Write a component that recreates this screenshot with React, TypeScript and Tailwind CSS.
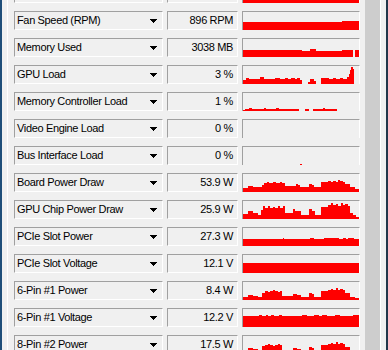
import React from "react";

type Run = [number, number];

const W = 116;
const H = 18;

function expand(runs: Run[]): number[] {
  const arr: number[] = [];
  for (const [n, h] of runs) for (let i = 0; i < n; i++) arr.push(h);
  while (arr.length < W) arr.push(arr.length ? arr[arr.length - 1] : 0);
  return arr.slice(0, W);
}

function Graph({ runs }: { runs: Run[] }) {
  const hs = expand(runs);
  let d = "";
  hs.forEach((h, i) => {
    if (h > 0) d += `M${i} ${H - h}h1v${h}h-1z`;
  });
  return (
    <div className="w-[118px] h-[19px] shrink-0 border-t border-l border-r border-[#a0a0a0] border-r-white">
      <svg width={W} height={H} viewBox={`0 0 ${W} ${H}`} shapeRendering="crispEdges" className="block">
        <path d={d} fill="#ff0000" />
      </svg>
    </div>
  );
}

function Arrow() {
  return (
    <svg width="7" height="4" viewBox="0 0 7 4" shapeRendering="crispEdges" className="block shrink-0">
      <path d="M0 0h7v1h-1v1h-1v1h-1v1h-1v-1h-1v-1h-1v-1h-1z" fill="#000" />
    </svg>
  );
}

const rows: { label: string; value: string; runs: Run[] }[] = [
  { label: "Fan Speed (%)", value: "33 %", runs: [[116, 8]] },
  { label: "Fan Speed (RPM)", value: "896 RPM", runs: [[99, 8], [17, 9]] },
  {
    label: "Memory Used",
    value: "3038 MB",
    runs: [[59, 7], [8, 6], [6, 8], [26, 6], [11, 7], [2, 0], [4, 7]],
  },
  {
    label: "GPU Load",
    value: "3 %",
    runs: [
      [3, 4], [3, 6], [9, 5], [2, 5], [4, 7], [11, 5], [5, 6], [5, 5], [3, 6], [3, 5], [4, 6], [2, 5], [3, 6], [2, 4],
      [6, 0], [2, 2], [4, 5], [2, 3], [5, 0], [8, 6], [4, 5], [3, 6], [4, 5], [3, 6], [4, 5], [2, 7], [1, 10], [1, 14],
      [2, 17], [1, 15], [5, 0],
    ],
  },
  {
    label: "Memory Controller Load",
    value: "1 %",
    runs: [[2, 1], [4, 2], [3, 3], [12, 2], [2, 3], [10, 2], [3, 3], [20, 2], [6, 0], [4, 2], [4, 0], [10, 2], [2, 3], [12, 2], [22, 0]],
  },
  { label: "Video Engine Load", value: "0 %", runs: [[116, 0]] },
  { label: "Bus Interface Load", value: "0 %", runs: [[57, 0], [2, 1], [57, 0]] },
  {
    label: "Board Power Draw",
    value: "53.9 W",
    runs: [
      [5, 4], [5, 6], [5, 5], [4, 5], [2, 7], [3, 9], [2, 10], [4, 9], [3, 10], [4, 9], [2, 10], [3, 9], [11, 6], [2, 8], [2, 7],
      [9, 5], [3, 8], [2, 7], [7, 5], [7, 10], [3, 11], [2, 10], [3, 11], [2, 10], [2, 12], [3, 11], [2, 10], [5, 8], [5, 5], [4, 3],
    ],
  },
  {
    label: "GPU Chip Power Draw",
    value: "25.9 W",
    runs: [
      [5, 5], [5, 8], [5, 6], [3, 4], [2, 9], [2, 13], [3, 11], [2, 13], [3, 11], [2, 12], [3, 11], [2, 13], [3, 11], [2, 13],
      [8, 6], [2, 10], [6, 8], [8, 4], [3, 10], [3, 8], [6, 4], [7, 12], [3, 14], [2, 16], [3, 14], [2, 15], [3, 13], [2, 16],
      [2, 14], [3, 15], [2, 13], [3, 6], [3, 4], [3, 2],
    ],
  },
  {
    label: "PCIe Slot Power",
    value: "27.3 W",
    runs: [[40, 7], [1, 8], [26, 7], [4, 8], [10, 7], [15, 8], [4, 7], [3, 8], [2, 7], [6, 8], [5, 7]],
  },
  { label: "PCIe Slot Voltage", value: "12.1 V", runs: [[116, 10]] },
  {
    label: "6-Pin #1 Power",
    value: "8.4 W",
    runs: [
      [5, 3], [5, 5], [5, 4], [4, 3], [3, 7], [3, 9], [2, 8], [3, 9], [2, 10], [3, 9], [2, 8], [2, 9], [11, 4], [4, 6], [4, 5],
      [8, 3], [3, 7], [2, 6], [7, 3], [7, 9], [3, 10], [2, 11], [3, 10], [2, 12], [2, 10], [3, 11], [2, 10], [5, 7], [5, 3], [4, 2],
    ],
  },
  {
    label: "6-Pin #1 Voltage",
    value: "12.2 V",
    runs: [
      [16, 11], [3, 12], [4, 11], [2, 12], [3, 11], [3, 12], [5, 11], [3, 12], [20, 11], [5, 12], [7, 11], [5, 12], [3, 11],
      [5, 12], [8, 11], [5, 12], [13, 11], [6, 12],
    ],
  },
  {
    label: "8-Pin #2 Power",
    value: "17.5 W",
    runs: [
      [5, 4], [5, 6], [5, 5], [4, 4], [3, 8], [3, 9], [2, 10], [3, 9], [2, 8], [3, 9], [2, 10], [2, 9], [11, 4], [4, 6], [4, 5],
      [8, 3], [3, 7], [2, 6], [7, 3], [7, 9], [3, 10], [2, 11], [3, 10], [2, 12], [2, 10], [3, 11], [2, 10], [5, 7], [5, 3], [4, 2],
    ],
  },
];

const boxBorder = "border border-[#a0a0a0] border-b-white border-r-white";

export default function App() {
  return (
    <div
      className="flex w-[388px] h-[350px] overflow-hidden bg-[#f0f0f0] border-l-2 border-l-[#1f4e79] border-r-2 border-r-[#22364a] text-[11px] text-black tracking-[-0.35px]"
      style={{ fontFamily: '"Liberation Sans", Arial, sans-serif' }}
    >
      <div className="pl-[5px] flex">
        <div className="border-l border-white pl-[6px]">
          <div className="-mt-[16px] flex flex-col gap-[8px]">
            {rows.map((r) => (
              <div key={r.label} className="flex gap-[4px] h-[19px]">
                <div className={`${boxBorder} w-[149px] h-[19px] flex items-center justify-between pl-[2px] pr-[5px] leading-[17px] whitespace-nowrap`}>
                  <span>{r.label}</span>
                  <Arrow />
                </div>
                <div className={`${boxBorder} w-[71px] h-[19px] flex items-center justify-end pr-[4px] leading-[17px] whitespace-nowrap`}>
                  {r.value}
                </div>
                <Graph runs={r.runs} />
              </div>
            ))}
          </div>
        </div>
      </div>
      <div className="w-[5px] shrink-0" />
      <div className="w-[15px] shrink-0 bg-[#cdcdcd]" />
      <div className="w-[1px] shrink-0 bg-white" />
      <div className="flex-1" />
    </div>
  );
}
